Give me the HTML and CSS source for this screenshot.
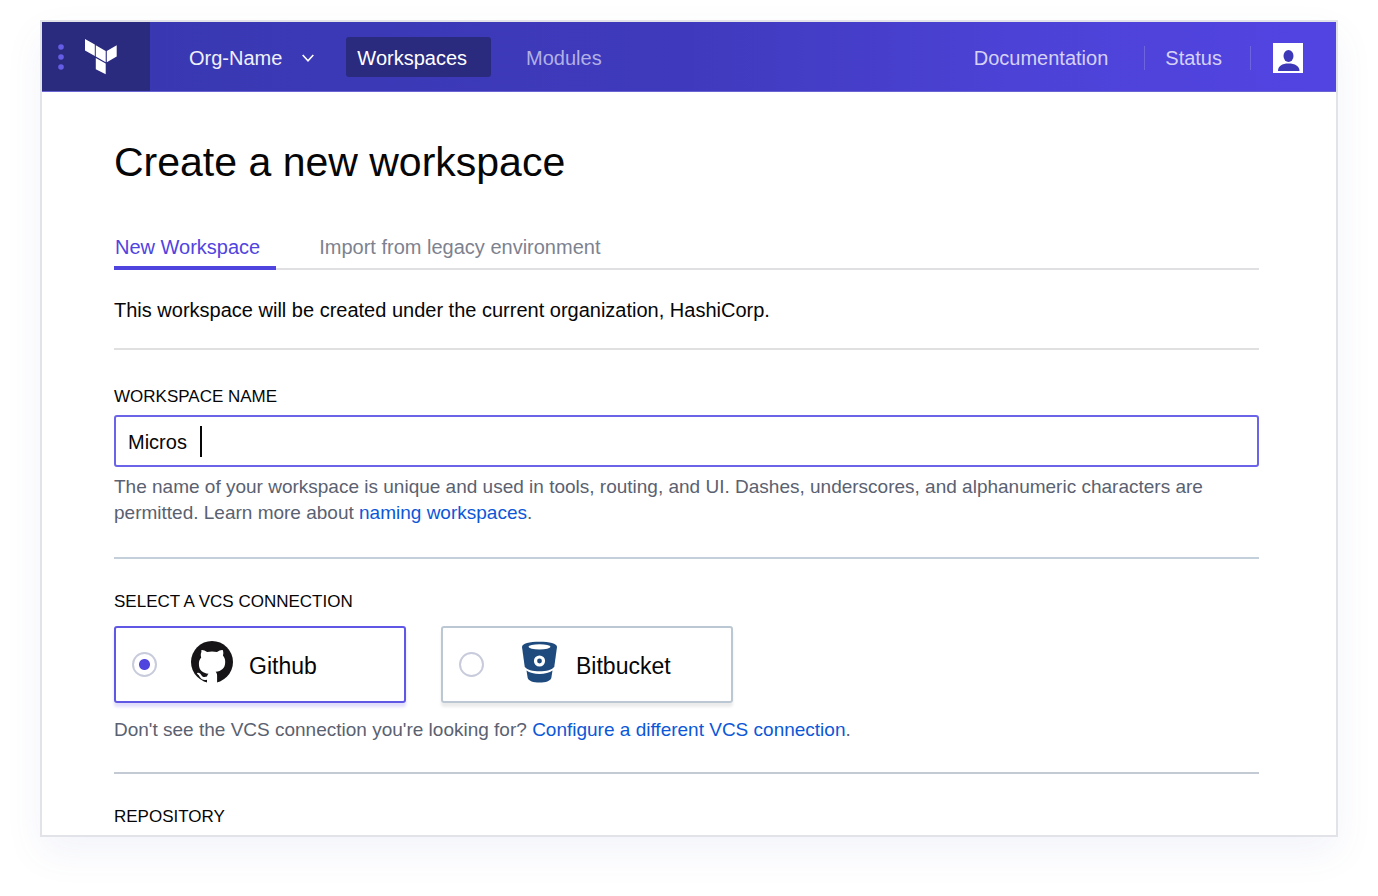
FILE: index.html
```html
<!DOCTYPE html>
<html lang="en">
<head>
<meta charset="utf-8">
<title>Create a new workspace</title>
<link rel="stylesheet" href="styles.css">
</head>
<body>
<div class="window">
  <header class="topbar">
    <div class="brand">
      <button class="menu-button" type="button" aria-label="Menu">
        <svg width="6" height="28" viewBox="0 0 6 28"><circle cx="3" cy="4" r="2.800"/><circle cx="3" cy="14" r="2.800"/><circle cx="3" cy="24" r="2.800"/></svg>
      </button>
      <a class="logo" href="#" aria-label="Terraform">
        <svg width="32" height="36" viewBox="0 0 32 36"><path d="M0 0v11.500l9.800 5.600V5.600zM10.800 6.200v11.400l9.900 5.700V11.900zM21.800 11.900v11.400l9.900-5.700V6.200zM10.800 18.900v11.300l9.900 5V24.500z"/></svg>
      </a>
    </div>
    <button class="org" type="button">Org-Name
      <svg width="12" height="8" viewBox="0 0 12 8"><path d="M.7 1l5.300 5.800L11.300 1"/></svg>
    </button>
    <nav class="nav">
      <a class="nav-link nav-current" href="#">Workspaces</a>
      <a class="nav-link" href="#">Modules</a>
    </nav>
    <nav class="utility">
      <a class="utility-link utility-docs" href="#">Documentation</a>
      <a class="utility-link utility-status" href="#">Status</a>
      <button class="avatar" type="button" aria-label="Account">
        <svg width="30" height="30" viewBox="0 0 30 30"><ellipse cx="15.500" cy="13" rx="5" ry="6"/><path d="M5 28c0-5 4-7.500 10.500-7.500S26.500 23 26.500 28z"/></svg>
      </button>
    </nav>
  </header>

  <main class="content">
    <h1 class="title">Create a new workspace</h1>
    <nav class="tabs">
      <a class="tab tab-current" href="#">New Workspace</a>
      <a class="tab" href="#">Import from legacy environment</a>
    </nav>
    <p class="intro">This workspace will be created under the current organization, HashiCorp.</p>

    <section class="section section-first">
      <label class="label" for="workspace-name">WORKSPACE NAME</label>
      <div class="field">
        <input class="input" id="workspace-name" type="text" value="Micros">
        <span class="caret"></span>
      </div>
      <p class="hint">The name of your workspace is unique and used in tools, routing, and UI. Dashes, underscores, and alphanumeric characters are permitted. Learn more about <a class="link" href="#">naming workspaces</a>.</p>
    </section>

    <section class="section section-vcs">
      <h2 class="label" id="vcs-label">SELECT A VCS CONNECTION</h2>
      <div class="options" role="radiogroup" aria-labelledby="vcs-label">
        <label class="option option-selected">
          <input class="radio" type="radio" name="vcs" checked>
          <svg class="option-icon" width="42" height="42" viewBox="0 0 42 42"><circle cx="21" cy="21" r="21" fill="#161416"/><path fill="#fff" d="M10.400 9c1.700-.3 3.800.7 5.700 2 3.200-.8 6.700-.8 9.900 0 1.900-1.300 4-2.300 5.700-2 .8 2 .8 3.900.2 5.600 1.700 2 2.300 3.900 2.300 6.300 0 6.400-3.800 9.200-9.600 9.800 1 1 1.500 2.300 1.500 4.100V43H16v-4.300c-3.600.6-5.800-.2-7.100-2.700-.7-1.400-1.400-2.300-2.500-3.100-1-.8-.2-1.300.8-1.100 1.500.2 2.400 1.200 3.200 2.400 1.300 2 3 2.200 5.600 1.400.2-1.300.7-2.300 1.500-2.900-5.800-.7-9.600-3.400-9.600-9.800 0-2.400.6-4.300 2.300-6.300-.6-1.700-.6-3.600.2-5.600z"/></svg>
          <span class="option-name">Github</span>
        </label>
        <label class="option">
          <input class="radio" type="radio" name="vcs">
          <svg class="option-icon" width="42" height="42" viewBox="0 0 42 42"><path fill="#1f4a7d" d="M4 6C4 2.500 11.500.8 21.500.8S39 2.500 39 6l-2.700 19.500C34.500 29 28 30.300 21.500 30.300S8.500 29 6.700 25.500z"/><ellipse fill="#fff" cx="21.500" cy="5.800" rx="11" ry="2.600"/><circle cx="21.500" cy="20" r="4" fill="#1f4a7d" stroke="#fff" stroke-width="3.200"/><path fill="#1f4a7d" d="M8.500 29.500C14 34 29 34 34.500 29.500L33.300 37C32 40.300 28 41.500 21.500 41.500S11 40.300 9.700 37z"/></svg>
          <span class="option-name">Bitbucket</span>
        </label>
      </div>
      <p class="hint hint-vcs">Don't see the VCS connection you're looking for? <a class="link" href="#">Configure a different VCS connection</a>.</p>
    </section>

    <section class="section section-repo">
      <h2 class="label">REPOSITORY</h2>
    </section>
  </main>
</div>
</body>
</html>
```
FILE: styles.css
```css
* {
  box-sizing: border-box;
}

body {
  margin: 0;
  padding: 20px 40px 60px;
  background: #fff;
  color: #060606;
  font-family: "Liberation Sans", Arial, sans-serif;
  font-size: 20px;
  line-height: 24px;
}

h1, h2, p {
  margin: 0;
  font-weight: 400;
}

a {
  text-decoration: none;
}

button {
  padding: 0;
  border: 0;
  background: none;
  color: inherit;
  font: inherit;
}

svg {
  display: block;
}

.window {
  border: 2px solid #e1e3e9;
  background: #fff;
  box-shadow: 0 16px 36px rgba(80, 100, 190, 0.07);
}

.topbar {
  display: flex;
  align-items: center;
  height: 70px;
  border-bottom: 1px solid #6a63d4;
  background: linear-gradient(90deg, #3838b0, #3f3abd 50%, #4c42d6 75%, #5244e2);
  color: #f0f0fb;
}

.brand {
  display: flex;
  align-items: center;
  align-self: stretch;
  width: 108px;
  padding-left: 16px;
  gap: 21px;
  background: #2a2a7f;
}

.menu-button {
  fill: #655de6;
}

.logo {
  fill: #fff;
}

.org {
  display: flex;
  align-items: center;
  gap: 20px;
  margin: 2px 32px 0 39px;
}

.org svg {
  fill: none;
  stroke: #fff;
  stroke-width: 1.6;
}

.nav {
  display: flex;
  gap: 24px;
}

.nav-link {
  padding: 9px 24px 7px 11px;
  border-radius: 3px;
  color: #b2b0e6;
}

.nav-current {
  background: #2a2a7f;
  color: #fff;
}

.utility {
  display: flex;
  align-items: center;
  margin-left: auto;
  padding-right: 33px;
}

.utility-link {
  margin-top: 2px;
  border-right: 1px solid #6d65df;
  color: #d5d2f6;
}

.utility-docs {
  padding-right: 36px;
}

.utility-status {
  padding: 0 28px 0 20px;
}

.avatar {
  margin: 2px 0 0 22px;
  background: #fff;
  fill: #3c38b8;
}

.content {
  padding: 46px 77px 8px 72px;
}

.title {
  font-size: 41px;
  line-height: 48px;
}

.tabs {
  display: flex;
  gap: 43px;
  margin-top: 49px;
  border-bottom: 2px solid #e0e0e2;
}

.tab {
  margin-bottom: -2px;
  padding: 0 0 8px;
  color: #7d828f;
}

.tab-current {
  padding: 0 16px 7px 1px;
  border-bottom: 4px solid #5044df;
  color: #5044df;
}

.intro {
  padding: 28px 0 26px;
}

.section {
  border-top: 2px solid #e0e0e0;
}

.section-first {
  padding: 37px 0 31px;
}

.section-vcs {
  padding: 33px 0 29px;
  border-color: #c3cfda;
}

.section-repo {
  padding-top: 33px;
  border-color: #c3cad3;
}

.label {
  display: block;
  font-size: 17px;
  line-height: 20px;
}

.field {
  position: relative;
  margin-top: 8px;
}

.input {
  display: block;
  width: 100%;
  height: 52px;
  padding: 2px 12px 0;
  border: 2px solid #6c64e8;
  border-radius: 3px;
  outline: 0;
  background: #fff;
  color: inherit;
  font: inherit;
}

.caret {
  position: absolute;
  top: 11px;
  left: 86px;
  width: 2px;
  height: 31px;
  background: #060606;
}

.hint {
  margin-top: 7px;
  color: #5a6170;
  font-size: 19px;
  line-height: 26px;
}

.hint-vcs {
  margin-top: 14px;
}

.link {
  color: #0b57d8;
}

.options {
  display: flex;
  gap: 35px;
  margin-top: 14px;
}

.option {
  display: flex;
  align-items: center;
  width: 292px;
  height: 77px;
  padding-left: 16px;
  border: 2px solid #bcc7d4;
  border-radius: 3px;
  box-shadow: 0 4px 3px rgba(0, 0, 0, 0.08);
}

.option-selected {
  border-color: #6058e4;
  box-shadow: 0 4px 3px rgba(90, 70, 230, 0.18);
}

.radio {
  appearance: none;
  width: 25px;
  height: 25px;
  margin: 0;
  border: 2px solid #c8cbdb;
  border-radius: 50%;
  background: #fff;
}

.radio:checked {
  background: radial-gradient(circle, #5044df 5px, #fff 6px);
}

.option-icon {
  margin: 0 16px 6px 34px;
}

.option-name {
  padding-top: 2px;
  font-size: 23px;
  line-height: 28px;
}
```
